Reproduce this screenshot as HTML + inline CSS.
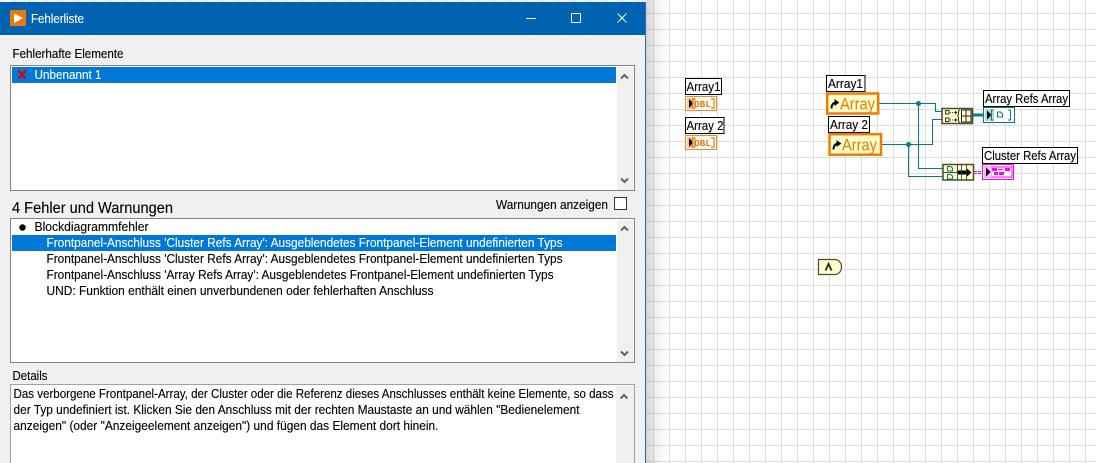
<!DOCTYPE html>
<html><head><meta charset="utf-8"><style>
html,body{margin:0;padding:0;background:#fff;overflow:hidden}
svg{display:block}
text{font-family:"Liberation Sans",sans-serif;font-size:12.5px;fill:#000;stroke:#000;stroke-width:.12px}
text.w{fill:#fff;stroke:#fff}
text.o{fill:#f27a00;stroke:none;font-size:16.5px}
text.d{font-family:"Liberation Mono",monospace;font-size:9px;font-weight:bold;fill:#f07800;stroke:none}
.wire{fill:none;stroke:#008080;stroke-width:1}
.lb{fill:#fff;stroke:#000;stroke-width:1}
.fn{fill:#ffffcc;stroke:#4a4a30;stroke-width:1.5}
.ic{fill:none;stroke:#333;stroke-width:1}
</style></head><body>
<svg xmlns="http://www.w3.org/2000/svg" width="1096" height="463" viewBox="0 0 1096 463">
<defs>
<pattern id="g" x="13" y="13" width="16" height="16" patternUnits="userSpaceOnUse">
<rect width="16" height="16" fill="#fff"/>
<rect width="1" height="16" fill="#dedede"/><rect width="16" height="1" fill="#dedede"/>
</pattern>
<linearGradient id="s" x1="0" x2="1" y1="0" y2="0">
<stop offset="0" stop-color="#000" stop-opacity=".17"/>
<stop offset=".45" stop-color="#000" stop-opacity=".06"/>
<stop offset="1" stop-color="#000" stop-opacity="0"/>
</linearGradient>
</defs>
<rect width="1096" height="463" fill="url(#g)"/>
<rect x="646" y="0" width="22" height="463" fill="url(#s)"/>
<rect x="0" y="0" width="646" height="2" fill="#000" opacity=".05"/>

<!-- window -->
<rect x="0" y="2" width="646" height="461" fill="#f0f0f0"/>
<rect x="645" y="2" width="1" height="461" fill="#2a6ea5"/>
<rect x="0" y="2" width="645" height="33" fill="#0063b1"/>
<rect x="10" y="10" width="16" height="16" fill="#e57a0f"/>
<path d="M14 13.5L23 18L14 23Z" fill="#fff"/>
<text x="31" y="23" class="w" textLength="53" lengthAdjust="spacingAndGlyphs">Fehlerliste</text>
<rect x="526" y="18" width="10" height="1" fill="#fff"/>
<rect x="571.5" y="13.5" width="9" height="9" fill="none" stroke="#fff"/>
<path d="M617.5 13.5L626.5 22.5M626.5 13.5L617.5 22.5" stroke="#fff" stroke-width="1" fill="none"/>

<text x="12.5" y="58" textLength="111" lengthAdjust="spacingAndGlyphs">Fehlerhafte Elemente</text>

<!-- list 1 -->
<rect x="10.5" y="65.5" width="624" height="125" fill="#fff" stroke="#82828a"/>
<rect x="12" y="67" width="604" height="16" fill="#0078d7"/>
<path d="M18.5 70.5L25.5 78.5M25.5 70.5L18.5 78.5" stroke="#e00000" stroke-width="2.4" fill="none"/>
<text x="34.5" y="79" class="w" textLength="67" lengthAdjust="spacingAndGlyphs">Unbenannt 1</text>
<rect x="617" y="67" width="16" height="123" fill="#f0f0f0"/>
<path d="M621 78.5L624.5 75L628 78.5" stroke="#606060" stroke-width="2" fill="none"/>
<path d="M621 178.5L624.5 182L628 178.5" stroke="#606060" stroke-width="2" fill="none"/>

<text x="12" y="213" style="font-size:15.5px" textLength="161" lengthAdjust="spacingAndGlyphs">4 Fehler und Warnungen</text>
<text x="496" y="209" textLength="112" lengthAdjust="spacingAndGlyphs">Warnungen anzeigen</text>
<rect x="614.5" y="197.5" width="12" height="12" fill="#fff" stroke="#333"/>

<!-- list 2 -->
<rect x="10.5" y="218.5" width="624" height="144" fill="#fff" stroke="#82828a"/>
<rect x="12" y="235" width="604" height="16" fill="#0078d7"/>
<circle cx="22.5" cy="227.5" r="3.2" fill="#000"/>
<text x="34.5" y="231" textLength="114" lengthAdjust="spacingAndGlyphs">Blockdiagrammfehler</text>
<text x="46.5" y="247" class="w" textLength="516" lengthAdjust="spacingAndGlyphs">Frontpanel-Anschluss 'Cluster Refs Array': Ausgeblendetes Frontpanel-Element undefinierten Typs</text>
<text x="46.5" y="263" textLength="516" lengthAdjust="spacingAndGlyphs">Frontpanel-Anschluss 'Cluster Refs Array': Ausgeblendetes Frontpanel-Element undefinierten Typs</text>
<text x="46.5" y="279" textLength="507" lengthAdjust="spacingAndGlyphs">Frontpanel-Anschluss 'Array Refs Array': Ausgeblendetes Frontpanel-Element undefinierten Typs</text>
<text x="46.5" y="295" textLength="387" lengthAdjust="spacingAndGlyphs">UND: Funktion enthält einen unverbundenen oder fehlerhaften Anschluss</text>
<rect x="617" y="220" width="16" height="142" fill="#f0f0f0"/>
<path d="M621 230.5L624.5 227L628 230.5" stroke="#606060" stroke-width="2" fill="none"/>
<path d="M621 351.5L624.5 355L628 351.5" stroke="#606060" stroke-width="2" fill="none"/>

<text x="12.5" y="380" textLength="35" lengthAdjust="spacingAndGlyphs">Details</text>

<!-- details -->
<rect x="10.5" y="384.5" width="624" height="90" fill="#fff" stroke="#a0a0a8"/>
<text x="13.5" y="398" textLength="600" lengthAdjust="spacingAndGlyphs">Das verborgene Frontpanel-Array, der Cluster oder die Referenz dieses Anschlusses enthält keine Elemente, so dass</text>
<text x="13.5" y="414" textLength="566" lengthAdjust="spacingAndGlyphs">der Typ undefiniert ist. Klicken Sie den Anschluss mit der rechten Maustaste an und wählen "Bedienelement</text>
<text x="13.5" y="430" textLength="425" lengthAdjust="spacingAndGlyphs">anzeigen" (oder "Anzeigeelement anzeigen") und fügen das Element dort hinein.</text>
<rect x="616" y="386" width="18" height="77" fill="#f0f0f0"/>
<path d="M620.5 398.5L624 395L627.5 398.5" stroke="#606060" stroke-width="2" fill="none"/>

<!-- left terminals -->
<rect x="685.5" y="78.5" width="36" height="16" class="lb"/>
<text x="686.5" y="91" textLength="34" lengthAdjust="spacingAndGlyphs">Array1</text>
<rect x="685.5" y="96.5" width="31" height="14" fill="#fff" stroke="#f28a1e"/>
<rect x="687" y="98" width="9" height="11" fill="#fcc79a"/>
<path d="M689 99L693.5 103.5L689 108Z" fill="#000"/>
<path d="M695 99H692.5V108H695M711 99H714V108H711" fill="none" stroke="#f07800" stroke-width="1.2"/>
<text x="694" y="107" class="d" textLength="17" lengthAdjust="spacingAndGlyphs">DBL</text>

<rect x="685.5" y="117.5" width="38.5" height="16" class="lb"/>
<text x="686.5" y="130" textLength="37" lengthAdjust="spacingAndGlyphs">Array 2</text>
<rect x="685.5" y="135.5" width="31" height="14" fill="#fff" stroke="#f28a1e"/>
<rect x="687" y="137" width="9" height="11" fill="#fcc79a"/>
<path d="M689 138L693.5 142.5L689 147Z" fill="#000"/>
<path d="M695 138H692.5V147H695M711 138H714V147H711" fill="none" stroke="#f07800" stroke-width="1.2"/>
<text x="694" y="146" class="d" textLength="17" lengthAdjust="spacingAndGlyphs">DBL</text>

<!-- wires -->
<path class="wire" d="M879 103.5H935.5V111.5H942"/>
<path class="wire" d="M882 144.5H932.5V119.5H942"/>
<path class="wire" d="M918.5 103.5V168.5H943"/>
<path class="wire" d="M908.5 144.5V176.5H943"/>
<circle cx="918.5" cy="103.5" r="2.5" fill="#008080"/>
<circle cx="908.5" cy="144.5" r="2.5" fill="#008080"/>
<rect x="973" y="113.5" width="11" height="3" fill="#008080"/>
<path d="M974 172.5H983" stroke="#ff00ff" stroke-width="3" stroke-dasharray="3 1" fill="none"/>
<path d="M974 172.5H983" stroke="#fff" stroke-width="1" stroke-dasharray="3 1" fill="none"/>

<!-- big controls -->
<rect x="826.5" y="75.5" width="38.5" height="16" class="lb"/>
<text x="828" y="88" textLength="35" lengthAdjust="spacingAndGlyphs">Array1</text>
<rect x="827.2" y="93.5" width="51" height="20" fill="#ffffcc" stroke="#f27a00" stroke-width="2.5"/>
<path d="M831.5 108.5C831.5 104.5 833.5 102.5 836.5 102.5" stroke="#000" stroke-width="2" fill="none"/>
<path d="M835 100L838.5 102.5L835 105Z" fill="#000" stroke="#000"/>
<text x="840" y="109.5" class="o" textLength="35" lengthAdjust="spacingAndGlyphs">Array</text>

<rect x="828.5" y="116.5" width="41" height="16" class="lb"/>
<text x="830" y="129" textLength="38" lengthAdjust="spacingAndGlyphs">Array 2</text>
<rect x="829.5" y="134.2" width="51.5" height="20.5" fill="#ffffcc" stroke="#f27a00" stroke-width="2.5"/>
<path d="M833.5 149.5C833.5 145.5 835.5 143.5 838.5 143.5" stroke="#000" stroke-width="2" fill="none"/>
<path d="M837 141L840.5 143.5L837 146Z" fill="#000" stroke="#000"/>
<text x="842" y="150.5" class="o" textLength="35" lengthAdjust="spacingAndGlyphs">Array</text>

<!-- build array -->
<rect x="942" y="108.5" width="30.5" height="15" class="fn"/>
<path class="ic" d="M945.5 110.5h3.5v3.5h-3.5zM945.5 118h3.5v3.5h-3.5z"/>
<path d="M950 112.5h5M950 120h5" stroke="#333" stroke-dasharray="1 1" fill="none"/>
<path d="M955 110.5l2.5 2-2.5 2zM955 118l2.5 2-2.5 2z" fill="#333"/>
<path class="ic" d="M960 110c-1.5 0-1.5 1-1.5 2v2l-1 1.5 1 1.5v3c0 2 0 2 1.5 2"/>
<path d="M961.5 110h9.5v12h-9.5zM966 110v12M961.5 116h9.5" fill="none" stroke="#222" stroke-width="1"/>

<!-- array refs terminal -->
<rect x="983.5" y="107.5" width="31" height="15" fill="#fff" stroke="#008080"/>
<rect x="985" y="109" width="9" height="12" fill="#b4d8d8"/>
<path d="M987 110.5L991.5 115L987 119.5Z" fill="#000"/>
<path d="M993.5 110H991.5V120H993.5M1008 110H1010.5V120H1008" fill="none" stroke="#008080"/>
<path d="M997.5 112h3l2 2v3h-5z" fill="none" stroke="#008080"/>
<rect x="983.5" y="90.5" width="86" height="16" class="lb"/>
<text x="985" y="103" textLength="83" lengthAdjust="spacingAndGlyphs">Array Refs Array</text>

<!-- bundle -->
<rect x="943" y="164.5" width="30.5" height="15.5" class="fn"/>
<path d="M957.5 164.5V180" stroke="#4a4a30" fill="none"/>
<path d="M943 172.5H957.5" stroke="#4a4a30" fill="none"/>
<path class="ic" d="M947.5 166.5h3l2 1.5v3h-5zM947.5 174.5h3l2 1.5v3h-5z" style="stroke:#008080"/>
<path d="M958 170.5h9v-2l4.5 4-4.5 4v-2h-9z" fill="#000"/>
<path d="M961.5 165v15M966.5 165v15" stroke="#333" fill="none" stroke-width=".8"/>

<!-- cluster terminal -->
<rect x="982.5" y="164.5" width="31" height="15" fill="#fff" stroke="#ff00ff"/>
<rect x="984" y="166" width="8" height="12" fill="#fcb8fc"/>
<path d="M986 167.5L990.5 172L986 176.5Z" fill="#000"/>
<path d="M991.5 167H1012V177H991.5" fill="none" stroke="#ff00ff"/>
<rect x="992" y="168" width="5" height="3" fill="#ff00ff"/>
<rect x="998" y="169" width="5" height="1" fill="#ff00ff"/>
<rect x="1005" y="168" width="5" height="3" fill="#ff00ff"/>
<rect x="994" y="172" width="4" height="3" fill="#ff00ff"/>
<rect x="999" y="172" width="5" height="3" fill="#ff00ff"/>
<rect x="982.5" y="147.5" width="95" height="16" class="lb"/>
<text x="984" y="160" textLength="92" lengthAdjust="spacingAndGlyphs">Cluster Refs Array</text>

<!-- AND -->
<path d="M818.5 259.5H834.5C839 259.5 841.5 263 841.5 267C841.5 271 839 274.5 834.5 274.5H818.5Z" fill="#ffffcc" stroke="#4a4a30" stroke-width="1.2"/>
<path d="M825.5 270.5L828.5 264L831.5 270.5" fill="none" stroke="#333" stroke-width="2"/>
</svg>
</body></html>
